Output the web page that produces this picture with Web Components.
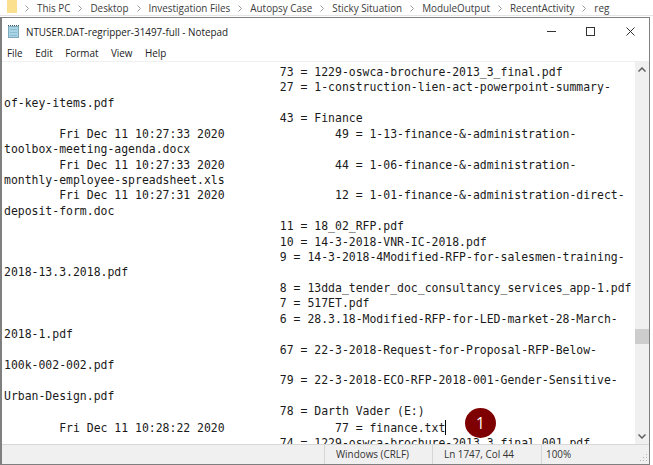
<!DOCTYPE html>
<html>
<head>
<meta charset="utf-8">
<title>Notepad</title>
<style>
  html, body { margin: 0; height: 100%; background: #fff; overflow: hidden; }
  body { font-family: "Open Sans", "Noto Sans", sans-serif; }
</style>
</head>
<body>
<explorer-crumbs></explorer-crumbs>
<notepad-window title-text="NTUSER.DAT-regripper-31497-full - Notepad"></notepad-window>
<step-badge>1</step-badge>

<script>
// Fil d'Ariane de l'explorateur, au-dessus de la fenêtre
class ExplorerCrumbs extends HTMLElement {
  constructor() {
    super();
    this.attachShadow({ mode: 'open' });
  }
  connectedCallback() {
    const items = ['This PC', 'Desktop', 'Investigation Files', 'Autopsy Case', 'Sticky Situation', 'ModuleOutput', 'RecentActivity', 'reg'];
    const sep = `<svg width="4" height="7" viewBox="0 0 4 7"><path d="M.5 .5 3.500 3.500 .5 6.500" fill="none" stroke="#9a9a9a"/></svg>`;
    this.shadowRoot.innerHTML = `
      <style>
        :host { display: flex; align-items: flex-start; height: 16px; padding-left: 7px; font: 9.9px/16px "Open Sans", sans-serif; color: #3c3c3c; background: #fff; border-bottom: 1px solid #e4e4e4; box-sizing: border-box; }
        .folder { width: 10px; height: 13px; background: #fbe08f; flex: none; }
        svg { margin: 5px 8px 0 8px; flex: none; }
        span { white-space: nowrap; }
      </style>
      <div class="folder"></div>
      ${items.map((t) => `${sep}<span>${t}</span>`).join('')}
    `;
  }
}

// Bouton de la barre de titre
class WindowButton extends HTMLElement {
  constructor() {
    super();
    this.attachShadow({ mode: 'open' });
  }
  connectedCallback() {
    const icons = {
      min: '<path d="M0 4.500H9" stroke="#333"/>',
      max: '<rect x=".5" y=".5" width="8" height="8" fill="none" stroke="#333"/>',
      close: '<path d="M.5 .5 8.500 8.500M8.500 .5 .5 8.500" stroke="#333" fill="none"/>'
    };
    this.shadowRoot.innerHTML = `
      <style>
        :host { display: flex; width: 39.5px; height: 26px; align-items: center; justify-content: center; }
      </style>
      <svg width="9" height="9" viewBox="0 0 9 9">${icons[this.getAttribute('kind')]}</svg>
    `;
  }
}

// Barre de défilement verticale
class ScrollRail extends HTMLElement {
  constructor() {
    super();
    this.attachShadow({ mode: 'open' });
  }
  connectedCallback() {
    this.shadowRoot.innerHTML = `
      <style>
        :host { display: block; position: relative; width: 14px; background: #f0f0f0; flex: none; }
        svg { position: absolute; left: 3px; }
        .up { top: 5px; }
        .down { bottom: 5px; }
        .thumb { position: absolute; left: 0; right: 0; top: 267px; height: 15px; background: #cdcdcd; }
      </style>
      <svg class="up" width="8" height="5" viewBox="0 0 8 5"><path d="M.5 4.500 4 1l3.500 3.500" fill="none" stroke="#606060" stroke-width="1.500"/></svg>
      <div class="thumb"></div>
      <svg class="down" width="8" height="5" viewBox="0 0 8 5"><path d="M.5 .5 4 4l3.500-3.500" fill="none" stroke="#606060" stroke-width="1.500"/></svg>
    `;
  }
}

// Barre d'état de Notepad
class StatusBar extends HTMLElement {
  constructor() {
    super();
    this.attachShadow({ mode: 'open' });
  }
  connectedCallback() {
    this.shadowRoot.innerHTML = `
      <style>
        :host { display: flex; height: 20px; background: #f0f0f0; border-top: 1px solid #d7d7d7; font: 9.9px/19px "Open Sans", sans-serif; color: #333; flex: none; box-sizing: border-box; position: relative; }
        div { border-left: 1px solid #d7d7d7; box-sizing: border-box; white-space: nowrap; }
        .fill { flex: 1; border: 0; }
        .enc { width: 108px; padding-left: 11px; }
        .pos { width: 109px; padding-left: 11px; }
        .zoom { width: 108px; padding-left: 4px; }
        svg { position: absolute; right: 1px; bottom: 2px; }
      </style>
      <div class="fill"></div>
      <div class="enc">Windows (CRLF)</div>
      <div class="pos">Ln 1747, Col 44</div>
      <div class="zoom">100%</div>
      <svg width="8" height="8" viewBox="0 0 8 8" fill="#b4b4b4">
        <rect x="6" y="0" width="1" height="1"/><rect x="3" y="3" width="1" height="1"/><rect x="6" y="3" width="1" height="1"/>
        <rect x="0" y="6" width="1" height="1"/><rect x="3" y="6" width="1" height="1"/><rect x="6" y="6" width="1" height="1"/>
      </svg>
    `;
  }
}

// Fenêtre complète
class NotepadWindow extends HTMLElement {
  constructor() {
    super();
    this.attachShadow({ mode: 'open' });
  }
  connectedCallback() {
    const title = this.getAttribute('title-text');
    const lines = [
      '\t\t\t\t\t73 = 1229-oswca-brochure-2013_3_final.pdf',
      '\t\t\t\t\t27 = 1-construction-lien-act-powerpoint-summary-',
      'of-key-items.pdf',
      '\t\t\t\t\t43 = Finance',
      '\tFri Dec 11 10:27:33 2020\t\t49 = 1-13-finance-&amp;-administration-',
      'toolbox-meeting-agenda.docx',
      '\tFri Dec 11 10:27:33 2020\t\t44 = 1-06-finance-&amp;-administration-',
      'monthly-employee-spreadsheet.xls',
      '\tFri Dec 11 10:27:31 2020\t\t12 = 1-01-finance-&amp;-administration-direct-',
      'deposit-form.doc',
      '\t\t\t\t\t11 = 18_02_RFP.pdf',
      '\t\t\t\t\t10 = 14-3-2018-VNR-IC-2018.pdf',
      '\t\t\t\t\t9 = 14-3-2018-4Modified-RFP-for-salesmen-training-',
      '2018-13.3.2018.pdf',
      '\t\t\t\t\t8 = 13dda_tender_doc_consultancy_services_app-1.pdf',
      '\t\t\t\t\t7 = 517ET.pdf',
      '\t\t\t\t\t6 = 28.3.18-Modified-RFP-for-LED-market-28-March-',
      '2018-1.pdf',
      '\t\t\t\t\t67 = 22-3-2018-Request-for-Proposal-RFP-Below-',
      '100k-002-002.pdf',
      '\t\t\t\t\t79 = 22-3-2018-ECO-RFP-2018-001-Gender-Sensitive-',
      'Urban-Design.pdf',
      '\t\t\t\t\t78 = Darth Vader (E:)',
      '\tFri Dec 11 10:28:22 2020\t\t77 = finance.txt<i></i>',
      '\t\t\t\t\t74 = 1229-oswca-brochure-2013_3_final_001.pdf'
    ];
    this.shadowRoot.innerHTML = `
      <style>
        :host { display: flex; flex-direction: column; position: absolute; left: 0; top: 17px; right: 3px; bottom: 0; border: 1px solid #7f7f7f; border-left-width: 2px; background: #fff; box-sizing: border-box; overflow: hidden; }
        .titlebar { display: flex; align-items: center; height: 27px; font: 9.9px "Open Sans", sans-serif; color: #222; flex: none; }
        .icon { margin: 0 7px 0 6px; flex: none; }
        .name { flex: 1; }
        .buttons { display: flex; margin-right: -1px; }
        .menu { display: flex; gap: 12.5px; height: 17px; align-items: center; padding-left: 5px; font: 9.9px "Open Sans", sans-serif; color: #222; border-bottom: 1px solid #f0f0f0; box-sizing: border-box; flex: none; }
        .body { flex: 1; display: flex; min-height: 0; }
        pre { flex: 1; margin: 0; padding: 3px 0 0 2px; overflow: hidden; font: 11.46px/15.42px "DejaVu Sans Mono", monospace; color: #1a1a1a; tab-size: 8; }
        i { display: inline-block; width: 1px; height: 15px; background: #000; vertical-align: -3px; }
      </style>
      <div class="titlebar">
        <svg class="icon" width="11" height="13" viewBox="0 0 11 13">
          <rect x=".5" y="1.500" width="10" height="11" fill="#a9d4e6" stroke="#7fa9ba"/>
          <path d="M0 .5h11" stroke="#35556b" stroke-dasharray="1 1"/>
          <path d="M2 4.500h7M2 7.500h7M2 10.500h7" stroke="#8dbdd1"/>
        </svg>
        <span class="name">${title}</span>
        <div class="buttons">
          <window-button kind="min"></window-button>
          <window-button kind="max"></window-button>
          <window-button kind="close"></window-button>
        </div>
      </div>
      <div class="menu"><span>File</span><span>Edit</span><span>Format</span><span>View</span><span>Help</span></div>
      <div class="body">
        <pre>${lines.join('\n')}</pre>
        <scroll-rail></scroll-rail>
      </div>
      <status-bar></status-bar>
    `;
  }
}

// Pastille numérotée posée sur la capture
class StepBadge extends HTMLElement {
  constructor() {
    super();
    this.attachShadow({ mode: 'open' });
  }
  connectedCallback() {
    this.shadowRoot.innerHTML = `
      <style>
        :host { position: absolute; left: 465px; top: 408px; width: 31px; height: 30px; border-radius: 50%; background: #7f0000; color: #fff; display: flex; align-items: center; justify-content: center; font: 15.5px "Open Sans", sans-serif; }
      </style>
      <slot></slot>
    `;
  }
}

customElements.define('explorer-crumbs', ExplorerCrumbs);
customElements.define('window-button', WindowButton);
customElements.define('scroll-rail', ScrollRail);
customElements.define('status-bar', StatusBar);
customElements.define('notepad-window', NotepadWindow);
customElements.define('step-badge', StepBadge);
</script>
</body>
</html>
